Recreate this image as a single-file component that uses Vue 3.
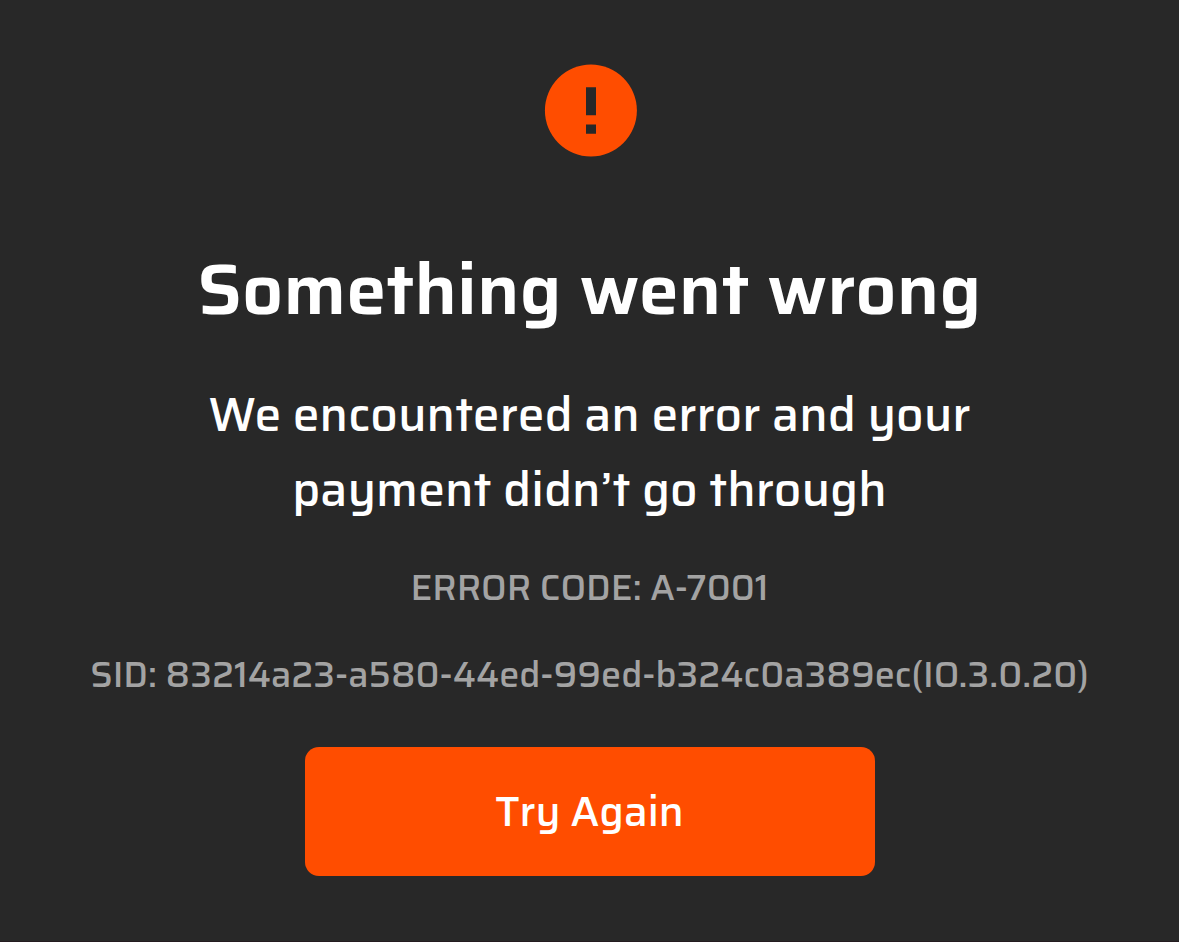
<script setup>
const errorCode = 'A-7001'
const sessionId = '83214a23-a580-44ed-99ed-b324c0a389ec(IO.3.0.20)'

function retry() {
  window.location.reload()
}
</script>

<template>
  <main class="page">
    <svg class="icon" viewBox="0 0 94 93" aria-hidden="true">
      <circle cx="47.9" cy="46.5" r="46" fill="#ff4d00" />
      <path d="M43 23.3h10v28H43zM43 60.4h10v9.3H43z" fill="#282828" />
    </svg>
    <h1 class="title">Something went wrong</h1>
    <p class="message">We encountered an error and your payment didn’t go through</p>
    <p class="detail">ERROR CODE: {{ errorCode }}</p>
    <p class="detail">SID: {{ sessionId }}</p>
    <button class="retry" type="button" @click="retry">Try Again</button>
  </main>
</template>

<style>
body {
  margin: 0;
  background: #282828;
}
</style>

<style scoped>
.page {
  box-sizing: border-box;
  min-height: 100vh;
  display: flex;
  flex-direction: column;
  align-items: center;
  padding: 64px 40px;
  background: #282828;
  border-bottom: 1px solid #241c20;
  color: #fff;
  font-family: Saira, Inter, "Liberation Sans", sans-serif;
  text-align: center;
}

.icon {
  width: 94px;
  height: 93px;
}

.title {
  margin: 87px 0 0;
  font-size: 72px;
  font-weight: 600;
  line-height: 90px;
}

.message {
  max-width: 820px;
  margin: 43px 0 0;
  font-size: 48px;
  font-weight: 500;
  line-height: 75px;
}

.detail {
  margin: 35px 0 0;
  color: #a3a3a3;
  font-size: 36px;
  font-weight: 500;
  line-height: 52px;
}

.retry {
  width: 100%;
  max-width: 570px;
  margin-top: 46px;
  padding: 33px 24px;
  border: 0;
  border-radius: 14px;
  background: #ff4d00;
  color: #fff;
  font-family: inherit;
  font-size: 42px;
  font-weight: 500;
  line-height: 63px;
  cursor: pointer;
}
</style>
